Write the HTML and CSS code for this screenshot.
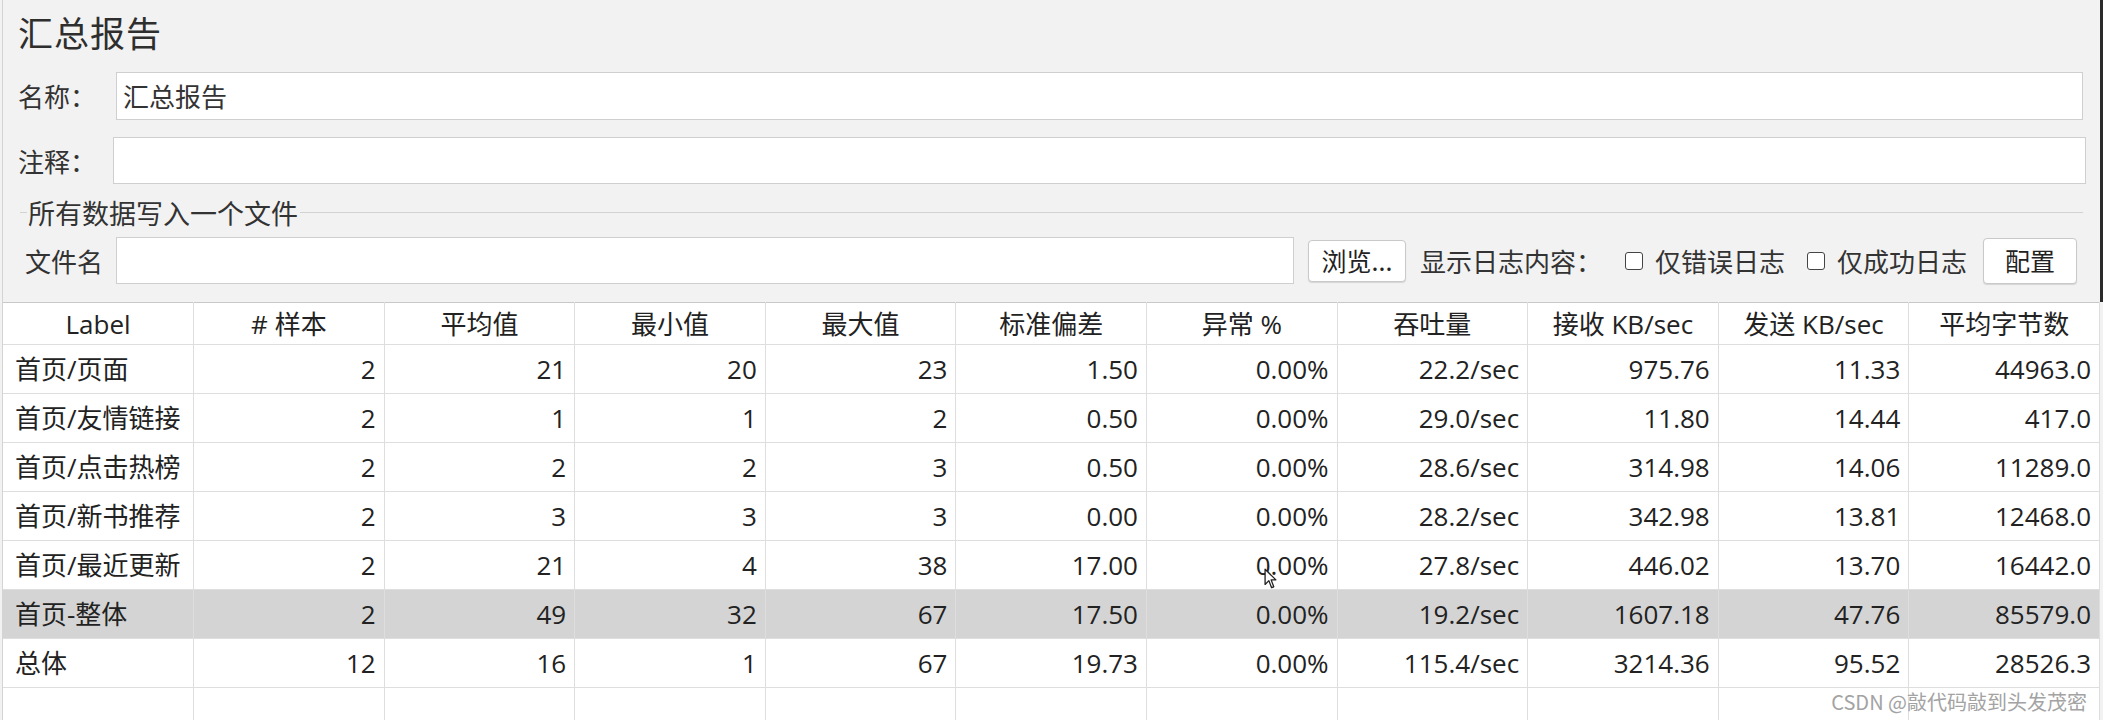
FILE: index.html
```html
<!DOCTYPE html>
<html lang="zh-CN">
<head>
<meta charset="utf-8">
<title>汇总报告</title>
<link rel="stylesheet" href="styles.css">
</head>
<body>
<div class="page">
  <div class="form">
    <h1 class="title">汇总报告</h1>
    <div class="row row-name">
      <span class="label label-name">名称：</span>
      <div class="input">汇总报告</div>
    </div>
    <div class="row row-comment">
      <span class="label label-comment">注释：</span>
      <div class="input input-comment"></div>
    </div>
    <div class="group-head"><span class="group-text">所有数据写入一个文件</span></div>
    <div class="row row-file">
      <span class="label label-file">文件名</span>
      <div class="input input-file"></div>
      <button class="btn btn-browse">浏览...</button>
      <span class="log-text">显示日志内容：</span>
      <span class="check check-err"><span class="box"></span>仅错误日志</span>
      <span class="check check-ok"><span class="box"></span>仅成功日志</span>
      <button class="btn btn-config">配置</button>
    </div>
  </div>
  <table class="report">
    <thead>
      <tr>
        <th>Label</th><th># 样本</th><th>平均值</th><th>最小值</th><th>最大值</th><th>标准偏差</th><th>异常 %</th><th>吞吐量</th><th>接收 KB/sec</th><th>发送 KB/sec</th><th>平均字节数</th>
      </tr>
    </thead>
    <tbody>
      <tr><td>首页/页面</td><td>2</td><td>21</td><td>20</td><td>23</td><td>1.50</td><td>0.00%</td><td>22.2/sec</td><td>975.76</td><td>11.33</td><td>44963.0</td></tr>
      <tr><td>首页/友情链接</td><td>2</td><td>1</td><td>1</td><td>2</td><td>0.50</td><td>0.00%</td><td>29.0/sec</td><td>11.80</td><td>14.44</td><td>417.0</td></tr>
      <tr><td>首页/点击热榜</td><td>2</td><td>2</td><td>2</td><td>3</td><td>0.50</td><td>0.00%</td><td>28.6/sec</td><td>314.98</td><td>14.06</td><td>11289.0</td></tr>
      <tr><td>首页/新书推荐</td><td>2</td><td>3</td><td>3</td><td>3</td><td>0.00</td><td>0.00%</td><td>28.2/sec</td><td>342.98</td><td>13.81</td><td>12468.0</td></tr>
      <tr><td>首页/最近更新</td><td>2</td><td>21</td><td>4</td><td>38</td><td>17.00</td><td class="cursor-cell">0.00%<svg class="cursor" width="13" height="22" viewBox="0 0 12 20"><path d="M1 1 L1 15 L4.5 11.5 L7 18 L9 17.2 L6.6 10.8 L11 10.8 Z" fill="#fff" stroke="#222" stroke-width="1.2" stroke-linejoin="round"/></svg></td><td>27.8/sec</td><td>446.02</td><td>13.70</td><td>16442.0</td></tr>
      <tr class="selected"><td>首页-整体</td><td>2</td><td>49</td><td>32</td><td>67</td><td>17.50</td><td>0.00%</td><td>19.2/sec</td><td>1607.18</td><td>47.76</td><td>85579.0</td></tr>
      <tr><td>总体</td><td>12</td><td>16</td><td>1</td><td>67</td><td>19.73</td><td>0.00%</td><td>115.4/sec</td><td>3214.36</td><td>95.52</td><td>28526.3</td></tr>
      <tr class="blank"><td></td><td></td><td></td><td></td><td></td><td></td><td></td><td></td><td></td><td></td><td></td></tr>
    </tbody>
  </table>
</div>
<div class="watermark">CSDN @敲代码敲到头发茂密</div>
</body>
</html>
```

FILE: styles.css
```css
* { box-sizing: border-box; }
html, body { margin: 0; padding: 0; }
body {
  width: 2103px;
  height: 720px;
  overflow: hidden;
  position: relative;
  background: #f2f2f2;
  font-family: "Noto Sans CJK SC", sans-serif;
  color: #333;
}
.page {
  margin-left: 2px;
  width: 2101px;
  height: 720px;
  border-left: 1px solid #d4d4d4;
}
.form {
  height: 302px;
  padding: 14px 17px 0 15px;
  border-right: 3px solid #2a2a2a;
}
.title {
  margin: 0;
  height: 36px;
  font-size: 35px;
  line-height: 36px;
  font-weight: normal;
  letter-spacing: 1px;
  color: #2e2e2e;
}
.row {
  display: flex;
  align-items: center;
}
.label {
  font-size: 26px;
  line-height: 1;
  color: #333;
  flex: none;
}
.input {
  flex: 1;
  height: 100%;
  background: #fff;
  border: 1px solid #cfcfcf;
  font-size: 26px;
  line-height: 1;
  padding-left: 6px;
  display: flex;
  align-items: center;
  color: #333;
}
.row-name { margin-top: 22px; height: 48px; }
.label-name { width: 98px; }
.row-comment { margin-top: 17px; height: 47px; margin-right: -3px; }
.label-comment { width: 95px; }
.group-head {
  margin-top: 14px;
  height: 28px;
  margin-left: 2px;
  display: flex;
  align-items: center;
  font-size: 27px;
  line-height: 1;
  color: #333;
}
.group-head::before {
  content: "";
  width: 7px;
  border-top: 1px solid #d2d2d2;
}
.group-head::after {
  content: "";
  flex: 1;
  border-top: 1px solid #d2d2d2;
  margin-left: 2px;
}
.group-text { padding-left: 1px; }
.row-file { margin-top: 11px; height: 47px; }
.label-file { width: 98px; padding-left: 7px; }
.input-file { flex: none; width: 1178px; }
.btn {
  flex: none;
  background: #fff;
  border: 1px solid #c9c9c9;
  border-radius: 4px;
  box-shadow: 0 1px 1px rgba(0,0,0,0.12);
  font-family: "Noto Sans CJK SC", sans-serif;
  font-size: 25px;
  line-height: 1;
  color: #222;
  padding: 0;
}
.btn-browse { width: 98px; height: 42px; margin-left: 14px; }
.log-text { font-size: 26px; line-height: 1; margin-left: 14px; width: 182px; flex: none; }
.check {
  display: flex;
  align-items: center;
  font-size: 26px;
  line-height: 1;
  flex: none;
}
.check-err { margin-left: 23px; width: 182px; }
.check-ok { width: 176px; }
.box {
  width: 18px;
  height: 18px;
  border: 1.5px solid #444;
  border-radius: 3px;
  background: #fff;
  margin-right: 12px;
}
.btn-config { width: 94px; height: 46px; margin-left: 0; }
.report {
  width: 2097px;
  border-collapse: collapse;
  table-layout: fixed;
  background: #fff;
  font-family: "Open Sans", "Noto Sans CJK SC", sans-serif;
  font-size: 26px;
  color: #222;
}
.report thead tr { border-top: 1px solid #c8c8c8; }
.report th {
  height: 42px;
  font-weight: normal;
  text-align: center;
  padding: 0;
  border-right: 1px solid #dedede;
  border-bottom: 1px solid #dedede;
  line-height: 1;
}
.report td {
  height: 49px;
  padding: 0 8px 0 12px;
  text-align: right;
  border-right: 1px solid #dedede;
  border-bottom: 1px solid #dedede;
  line-height: 1;
  white-space: nowrap;
}
.report td:first-child { text-align: left; }
.report tr.selected td { background: #d4d4d4; }
.cursor-cell { position: relative; }
.cursor {
  position: absolute;
  left: 117px;
  top: 27px;
}
.watermark {
  position: absolute;
  right: 16px;
  bottom: 8px;
  font-size: 20px;
  line-height: 1;
  color: #a3a3a3;
  font-family: "Noto Sans CJK SC", sans-serif;
}
```
